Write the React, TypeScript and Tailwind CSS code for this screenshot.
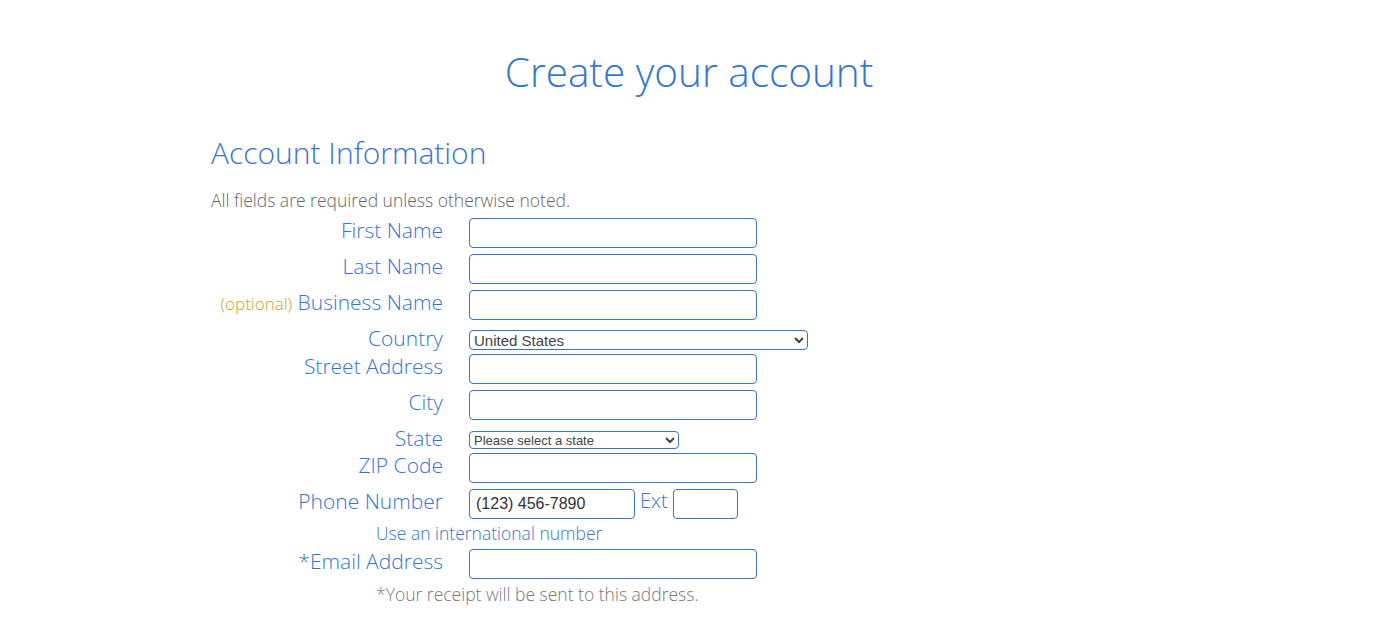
import React from "react";

const label = "w-[232px] shrink-0 text-right text-[21px] leading-[24px] font-light text-[#3575d3]";
const input = "h-[30px] w-[288px] rounded-[4px] border border-[#3a74c4] bg-white px-[6px] text-[16px] text-[#333] outline-none";

function InputRow({ children, right }: { children: React.ReactNode; right?: React.ReactNode }) {
  return (
    <div className="flex items-start gap-[26px]">
      <div className={label}>{children}</div>
      <div className="mb-[6px]">{right ?? <input className={input} style={{ fontFamily: "'Liberation Sans', Arial, sans-serif" }} />}</div>
    </div>
  );
}

export default function App() {
  return (
    <div className="min-h-[631px] bg-white" style={{ fontFamily: "'Open Sans', 'Noto Sans', sans-serif" }}>
      <div className="mx-auto w-[956px]">
        <h1 className="pt-[48px] text-center text-[40.5px] leading-[48px] font-light text-[#3575d3]">Create your account</h1>
        <h2 className="mt-[37px] text-[30px] leading-[40px] font-light text-[#3575d3]">Account Information</h2>
        <p className="mt-[15px] text-[17.5px] leading-[24px] font-light text-[#666]">All fields are required unless otherwise noted.</p>
        <div className="mt-[6px]">
          <InputRow>First Name</InputRow>
          <InputRow>Last Name</InputRow>
          <InputRow>
            <span className="text-[17px] text-[#c2a62e]">(optional)</span> Business Name
          </InputRow>
          <div className="flex items-start gap-[26px]">
            <div className={label}>Country</div>
            <select
              className="mt-[4px] mb-[4px] h-[20px] w-[339px] rounded-[4px] border border-[#3a74c4] bg-white text-[15px] text-[#444]"
              style={{ fontFamily: "'Liberation Sans', Arial, sans-serif" }}
              defaultValue="US"
            >
              <option value="US">United States</option>
            </select>
          </div>
          <InputRow>Street Address</InputRow>
          <InputRow>City</InputRow>
          <div className="flex items-start gap-[26px]">
            <div className={label}>State</div>
            <select
              className="mt-[5px] mb-[4px] h-[18px] w-[210px] rounded-[4px] border border-[#3a74c4] bg-white text-[13px] text-[#444]"
              style={{ fontFamily: "'Liberation Sans', Arial, sans-serif" }}
              defaultValue=""
            >
              <option value="">Please select a state</option>
            </select>
          </div>
          <InputRow>ZIP Code</InputRow>
          <div className="flex items-start gap-[26px]">
            <div className={label}>Phone Number</div>
            <div className="mb-[2px] flex items-start gap-[5px]">
              <input
                className="h-[30px] w-[166px] rounded-[4px] border border-[#3a74c4] bg-white px-[6px] text-[16px] text-[#333] outline-none"
                style={{ fontFamily: "'Liberation Sans', Arial, sans-serif" }}
                defaultValue="(123) 456-7890"
              />
              <span className="text-[20px] leading-[24px] font-light text-[#3575d3]">Ext</span>
              <input
                className="h-[30px] w-[65px] rounded-[4px] border border-[#3a74c4] bg-white px-[6px] text-[16px] outline-none"
                style={{ fontFamily: "'Liberation Sans', Arial, sans-serif" }}
              />
            </div>
          </div>
          <p className="mb-[4px] pl-[165px] text-[17.5px] leading-[24px] font-light text-[#3575d3]">Use an international number</p>
          <InputRow>*Email Address</InputRow>
          <p className="-mt-[3px] pl-[165px] text-[17.5px] leading-[24px] font-light text-[#777]">*Your receipt will be sent to this address.</p>
        </div>
      </div>
    </div>
  );
}
